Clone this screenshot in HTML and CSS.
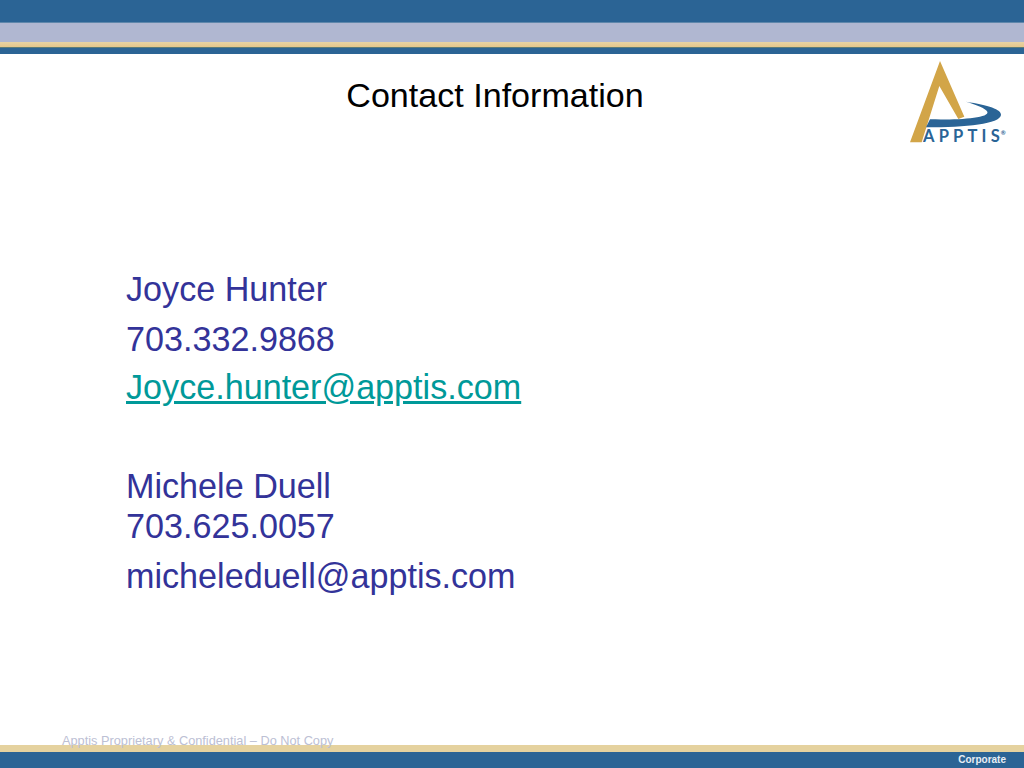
FILE: index.html
```html
<!DOCTYPE html>
<html lang="en">
<head>
<meta charset="utf-8">
<title>Contact Information</title>
<link rel="stylesheet" href="styles.css">
</head>
<body>
<div class="slide">
  <div class="bands">
    <div class="band-blue"></div>
    <div class="band-lav"></div>
    <div class="band-gold"></div>
    <div class="band-dark"></div>
    <div class="band-blue2"></div>
  </div>
  <header class="head">
    <h1 class="title">Contact Information</h1>
    <div class="logo">
      <svg class="logo-mark" width="134" height="100" viewBox="0 0 402 300" aria-hidden="true">
        <path class="gold" d="M150 33 L60 277 L95 277 L148 108 L205 207 L223 200 Z"/>
        <path class="blue" d="M228 155 C295 165 335 178 333 195 C330 222 230 232 108 232 L120 208 C200 210 300 205 292 185 C288 175 255 163 228 155 Z"/>
      </svg>
      <span class="logo-text">APPTI<span class="logo-end">S</span><sup class="reg">®</sup></span>
    </div>
  </header>
  <main class="body">
    <p class="l1">Joyce Hunter</p>
    <p class="l2">703.332.9868</p>
    <p class="l5"><a class="mail" href="#">Joyce.hunter@apptis.com</a></p>
    <p class="l3">Michele Duell</p>
    <p class="l4">703.625.0057</p>
    <p class="l2">micheleduell@apptis.com</p>
  </main>
  <footer class="foot">
    <div class="conf">Apptis Proprietary &amp; Confidential – Do Not Copy</div>
    <div class="foot-gold"></div>
    <div class="foot-blue"><span class="corp">Corporate</span></div>
  </footer>
</div>
</body>
</html>
```
FILE: styles.css
```css
* { box-sizing: border-box; }
html, body { margin: 0; padding: 0; background: #fff; overflow: hidden; }
.slide {
  width: 1024px; height: 768px;
  display: flex; flex-direction: column;
  font-family: "Liberation Sans", Arial, sans-serif;
  background: #fff;
}
.band-blue { height: 22px; background: #2b6495; }
.band-lav { height: 20px; background: #b0b7d1; border-top: 1px solid #5f87ab; }
.band-gold { height: 5px; background: linear-gradient(#e6d3a4, #e5c68a); }
.band-dark { height: 1px; background: #5d7d78; }
.band-blue2 { height: 6px; background: #2b6495; }
.head { display: flex; height: 90px; position: relative; }
.title {
  margin: 0; width: 990px; padding-top: 21px;
  text-align: center;
  font-size: 34.1px; line-height: 40px; font-weight: 400; color: #000;
}
.logo { position: absolute; left: 890px; top: -4px; width: 134px; height: 100px; }
.logo-mark { display: block; }
.gold { fill: #d2a548; }
.blue { fill: #2a6496; }
.logo-text {
  position: absolute; left: 33px; top: 76px;
  font-family: "Lato", "Liberation Sans", sans-serif;
  font-size: 16.5px; line-height: 20px; font-weight: 700; letter-spacing: 4.2px;
  color: #2a6496; white-space: nowrap;
}
.logo-end { letter-spacing: 0; }
.reg { font-size: 6px; letter-spacing: 0; vertical-align: 7px; line-height: 0; margin-left: 1px; }
.body { padding: 125px 0 0 126px; font-size: 34.15px; color: #333399; }
.body p { margin: 0; line-height: 40px; height: 40px; white-space: nowrap; }
.body .l2 { margin-top: 10px; }
.body .l5 { margin-top: 8px; }
.body .l3 { margin-top: 59px; }
.mail { color: #009999; text-decoration: underline; }
.foot { margin-top: auto; position: relative; }
.conf {
  position: absolute; left: 62px; top: -11px;
  font-size: 12.75px; line-height: 14px; color: #bcc0d4; white-space: nowrap;
}
.foot-gold { height: 7px; background: #e5d29f; }
.foot-blue { height: 16px; background: #2b6495; display: flex; justify-content: flex-end; align-items: center; padding-right: 18px; }
.corp { font-size: 10px; font-weight: 700; color: #e8eef4; line-height: 16px; }
```
